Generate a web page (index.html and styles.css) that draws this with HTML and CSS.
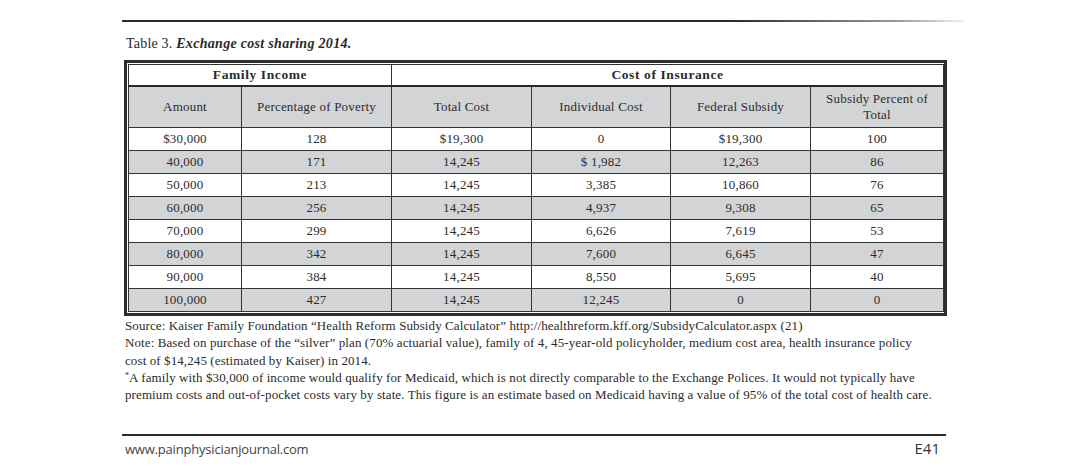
FILE: index.html
```html
<!DOCTYPE html>
<html>
<head>
<meta charset="utf-8">
<link rel="stylesheet" href="styles.css">
</head>
<body>
<div class="page">
  <div class="top-rule"></div>
  <p class="caption">Table 3. <b><i>Exchange cost sharing 2014.</i></b></p>
  <div class="frame">
    <table class="data">
      <colgroup>
        <col class="c1"><col class="c2"><col class="c3"><col class="c4"><col class="c5"><col class="c6">
      </colgroup>
      <thead>
        <tr class="group">
          <th colspan="2">Family Income</th>
          <th colspan="4">Cost of Insurance</th>
        </tr>
        <tr class="cols shade">
          <th>Amount</th>
          <th>Percentage of Poverty</th>
          <th>Total Cost</th>
          <th>Individual Cost</th>
          <th>Federal Subsidy</th>
          <th>Subsidy Percent of Total</th>
        </tr>
      </thead>
      <tbody>
        <tr><td>$30,000</td><td>128</td><td>$19,300</td><td>0</td><td>$19,300</td><td>100</td></tr>
        <tr class="shade"><td>40,000</td><td>171</td><td>14,245</td><td>$ 1,982</td><td>12,263</td><td>86</td></tr>
        <tr><td>50,000</td><td>213</td><td>14,245</td><td>3,385</td><td>10,860</td><td>76</td></tr>
        <tr class="shade"><td>60,000</td><td>256</td><td>14,245</td><td>4,937</td><td>9,308</td><td>65</td></tr>
        <tr><td>70,000</td><td>299</td><td>14,245</td><td>6,626</td><td>7,619</td><td>53</td></tr>
        <tr class="shade"><td>80,000</td><td>342</td><td>14,245</td><td>7,600</td><td>6,645</td><td>47</td></tr>
        <tr><td>90,000</td><td>384</td><td>14,245</td><td>8,550</td><td>5,695</td><td>40</td></tr>
        <tr class="shade"><td>100,000</td><td>427</td><td>14,245</td><td>12,245</td><td>0</td><td>0</td></tr>
      </tbody>
    </table>
  </div>
  <div class="notes">
    <p>Source: Kaiser Family Foundation “Health Reform Subsidy Calculator” http://healthreform.kff.org/SubsidyCalculator.aspx (21)</p>
    <p>Note: Based on purchase of the “silver” plan (70% actuarial value), family of 4, 45-year-old policyholder, medium cost area, health insurance policy<br>cost of $14,245 (estimated by Kaiser) in 2014.</p>
    <p><sup>*</sup>A family with $30,000 of income would qualify for Medicaid, which is not directly comparable to the Exchange Polices. It would not typically have<br>premium costs and out-of-pocket costs vary by state. This figure is an estimate based on Medicaid having a value of 95% of the total cost of health care.</p>
  </div>
  <div class="footer">
    <span class="site">www.painphysicianjournal.com</span>
    <span class="folio">E41</span>
  </div>
</div>
</body>
</html>
```

FILE: styles.css
```css
html, body {
  margin: 0;
  padding: 0;
  background: #ffffff;
}

.page {
  padding: 20px 0 0 122px;
  width: 826px;
  font-family: "Liberation Serif", "Times New Roman", serif;
  color: #2b2b2b;
}

.top-rule {
  height: 2px;
  width: 842px;
  background: linear-gradient(to right, #2a2a2a 0%, #2a2a2a 72%, #9a9a9a 92%, #f2f2f2 100%);
}

.caption {
  margin: 13px 0 0 4px;
  font-size: 14px;
  line-height: 17px;
  letter-spacing: 0.2px;
  color: #2a2a2a;
}

.caption b {
  letter-spacing: 0.3px;
}

.frame {
  margin: 8px 0 0 2px;
  width: 815px;
  border: 3px solid #2e2e2e;
  padding: 1px;
}

.data {
  width: 815px;
  table-layout: fixed;
  border-collapse: collapse;
  font-size: 13px;
  letter-spacing: 0.2px;
  color: #2b2b2b;
}

.c1 { width: 113px; }
.c2 { width: 150px; }
.c3 { width: 140px; }
.c4 { width: 139px; }
.c5 { width: 140px; }
.c6 { width: 133px; }

.data th,
.data td {
  border: 1px solid #333333;
  padding: 0 6px;
  text-align: center;
  vertical-align: middle;
}

.data th {
  font-weight: normal;
  line-height: 16px;
}

.group th {
  height: 20px;
  font-weight: bold;
  font-size: 13.5px;
  letter-spacing: 0.6px;
  border-bottom: 2px solid #2a2a2a;
}

.cols th {
  height: 40px;
}

.data td {
  height: 22px;
  line-height: 14px;
}

.shade {
  background: #d3d4d6;
}

.notes {
  margin: 1px 0 0 3px;
  font-size: 13px;
  letter-spacing: 0.1px;
  line-height: 17.3px;
  color: #2b2b2b;
  white-space: nowrap;
}

.notes p {
  margin: 0;
}

.notes sup {
  font-size: 8px;
  line-height: 0;
  vertical-align: 4px;
}

.footer {
  margin-top: 31px;
  width: 824px;
  border-top: 2px solid #2a2a2a;
  padding-top: 2px;
  display: flex;
  justify-content: space-between;
  align-items: baseline;
  font-family: "Open Sans", "Liberation Sans", sans-serif;
  color: #444444;
}

.site {
  font-size: 13px;
  letter-spacing: -0.2px;
  margin-left: 3px;
}

.folio {
  font-size: 15px;
  margin-right: 6px;
  color: #333333;
}
```
